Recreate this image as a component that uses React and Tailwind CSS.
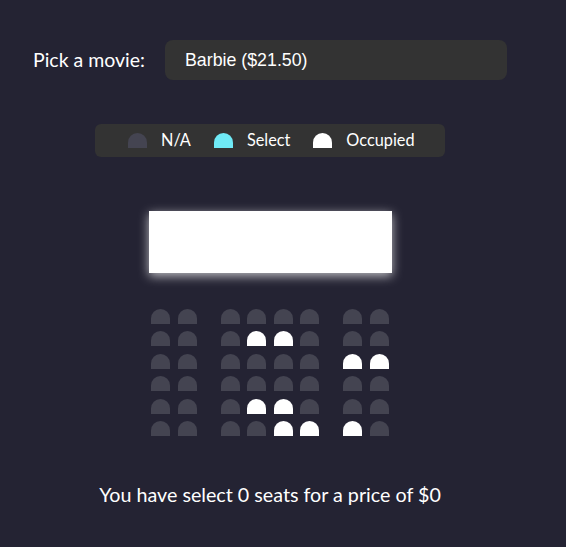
import { useState } from "react";

const occupied = {
  1: [3, 4],
  2: [6, 7],
  4: [3, 4],
  5: [4, 5, 6],
};

function Seat({ kind, className = "" }) {
  const color =
    kind === "occupied" ? "bg-white" : kind === "selected" ? "bg-[#6feaf6]" : "bg-[#444451]";
  return <div className={`w-[19px] h-[15px] rounded-t-[10px] ${color} ${className}`} />;
}

export default function App() {
  const [selected] = useState([]);
  const price = 21.5;
  return (
    <div className="min-h-screen w-full bg-[#242333] text-white" style={{ fontFamily: "Lato, 'Noto Sans', sans-serif" }}>
      <div className="w-[540px] flex flex-col items-center pt-[40px]">
        <div className="flex items-center w-[474px] gap-[20px]">
          <span className="text-[19.5px] leading-none">Pick a movie:</span>
          <div
            className="flex-1 h-[40px] rounded-lg bg-[#333333] flex items-center pl-[20px] text-[17.8px]"
            style={{ fontFamily: "'Liberation Sans', Arial, sans-serif" }}>
            Barbie ($21.50)
          </div>
        </div>

        <div className="mt-[44px] w-[350px] h-[33px] rounded-md bg-[#333333] flex items-center pl-[33px] text-[16.3px]">
          <Seat />
          <span className="ml-[14px] mr-[23px]">N/A</span>
          <Seat kind="selected" />
          <span className="ml-[14px] mr-[23px]">Select</span>
          <Seat kind="occupied" />
          <span className="ml-[14px]">Occupied</span>
        </div>

        <div className="mt-[54px] w-[243px] h-[62px] bg-white shadow-[0_3px_10px_rgba(255,255,255,0.7)]" />

        <div className="mt-[32px] flex flex-col">
          {[0, 1, 2, 3, 4, 5].map((r) => (
            <div key={r} className="flex">
              {[0, 1, 2, 3, 4, 5, 6, 7].map((c) => {
                const kind = occupied[r]?.includes(c)
                  ? "occupied"
                  : selected.includes(`${r}-${c}`)
                  ? "selected"
                  : "na";
                const spacing =
                  c === 1 ? "ml-[3.6px] mr-[21px]" : c === 6 ? "ml-[21px] mr-[3.6px]" : "mx-[3.6px]";
                return <Seat key={c} kind={kind} className={`my-[3.75px] ${spacing}`} />;
              })}
            </div>
          ))}
        </div>

        <p className="mt-[40px] text-[19.7px]">
          You have select {selected.length} seats for a price of ${selected.length * price}
        </p>
      </div>
    </div>
  );
}
